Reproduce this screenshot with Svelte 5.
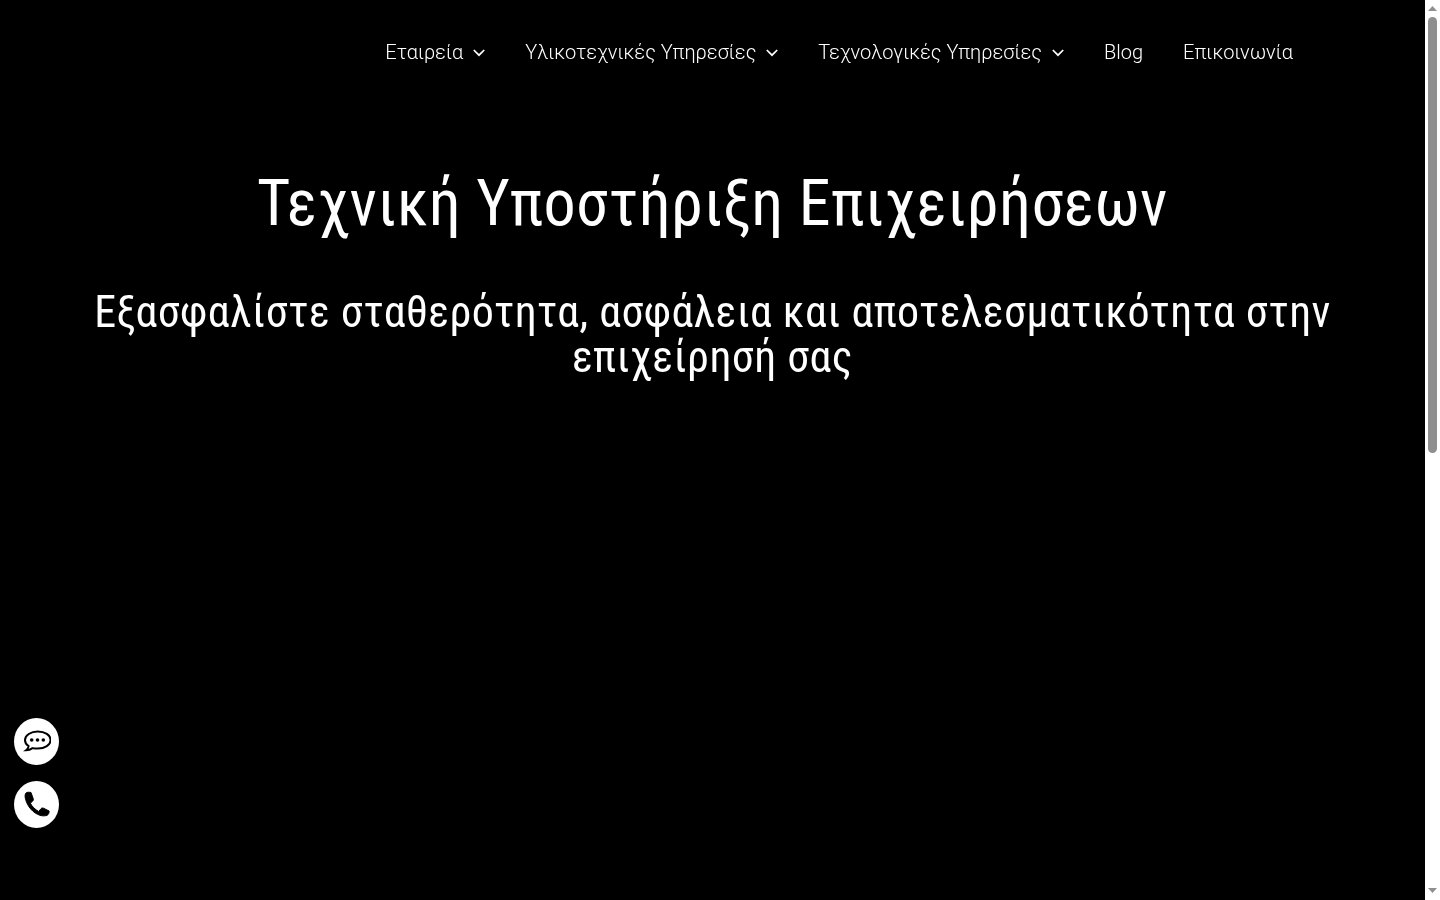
<script>
  const navItems = [
    { label: 'Εταιρεία', caret: true },
    { label: 'Υλικοτεχνικές Υπηρεσίες', caret: true },
    { label: 'Τεχνολογικές Υπηρεσίες', caret: true },
    { label: 'Blog', caret: false },
    { label: 'Επικοινωνία', caret: false }
  ];
</script>

<div class="window">
  <div class="page">
    <header class="top">
      <nav class="menu">
        {#each navItems as item}
          <a href="#top" class="menu_item">
            {item.label}
            {#if item.caret}
              <svg class="caret" viewBox="0 0 12 8" aria-hidden="true"><path d="M.8 1 6 6.200 11.200 1" /></svg>
            {/if}
          </a>
        {/each}
      </nav>
    </header>

    <section class="hero">
      <h1>Τεχνική Υποστήριξη Επιχειρήσεων</h1>
      <h2>Εξασφαλίστε σταθερότητα, ασφάλεια και αποτελεσματικότητα στην επιχείρησή σας</h2>
    </section>
  </div>

  <div class="scrollbar" aria-hidden="true">
    <svg class="arrow" viewBox="0 0 9 5"><path d="M4.500 0 9 5H0z" /></svg>
    <div class="track"><div class="thumb"></div></div>
    <svg class="arrow down" viewBox="0 0 9 5"><path d="M0 0h9L4.500 5z" /></svg>
  </div>
</div>

<div class="contact">
  <a href="#top" class="round" aria-label="Chat">
    <svg viewBox="0.500 0 28 28" width="28" height="28" aria-hidden="true">
      <path class="bubble" d="M15.300 3.500C8.200 3.500 2.500 7.300 2.500 12c0 2.500 1.400 4.700 3.600 6.200-.2 1.500-1 3-2.500 4.100 2.700 0 4.900-1 6.400-2.200 1.700.4 3.400.5 5.300.5 7.100 0 12.800-3.800 12.800-8.600s-5.700-8.500-12.800-8.500z" />
      <circle cx="9.200" cy="12" r="1.800" /><circle cx="15" cy="12" r="1.800" /><circle cx="20.800" cy="12" r="1.800" />
    </svg>
  </a>
  <a href="#top" class="round" aria-label="Phone">
    <svg class="phone" viewBox="-0.500 0.500 38 36" width="38" height="36" aria-hidden="true">
      <path d="M7.500 6.500C8.500 5.600 10.500 5.600 12.500 6L14.800 12.500C15 13.500 14.500 14.500 13.800 15L11.800 16.600C13.500 20 16.500 23 20.200 25L22.500 22.200C23.200 21.500 24 21.300 25 21.700L30.600 24.500C30.800 26 30 28.300 28.500 28.800C26.500 29.500 24 29.600 21.500 28.800C14.500 26.500 8.700 20 6.900 12C6.400 10 6.400 7.800 7.500 6.500Z" />
    </svg>
  </a>
</div>

<style>
  :global(html), :global(body) {
    overflow: hidden;
  }
  :global(body) {
    background: #000;
    color: #fff;
    font-family: Roboto, "Liberation Sans", sans-serif;
  }
  .window {
    display: flex;
    height: 900px;
  }
  .page {
    flex: 1;
    min-width: 0;
    will-change: transform;
  }
  .top {
    display: flex;
    justify-content: flex-end;
    padding: 40px 132px 0 0;
  }
  .menu {
    display: flex;
    gap: 40px;
  }
  .menu_item {
    display: flex;
    align-items: center;
    gap: 10px;
    color: #fff;
    font-size: 20px;
    font-weight: 300;
    line-height: 24px;
    text-decoration: none;
  }
  .caret {
    width: 12px;
    height: 8px;
    margin-top: 2px;
    fill: none;
    stroke: #fff;
    stroke-width: 1.700;
  }
  .hero {
    padding: 0 20px;
    margin-top: 104px;
    text-align: center;
  }
  h1 {
    margin: 0;
    font-size: 64px;
    font-weight: 400;
    font-stretch: 75%;
    line-height: 72px;
    letter-spacing: 0.470px;
  }
  h2 {
    margin: 50px 0 0;
    font-size: 44px;
    font-weight: 400;
    font-stretch: 75%;
    line-height: 45px;
    letter-spacing: 0.460px;
  }
  .scrollbar {
    display: flex;
    flex-direction: column;
    align-items: center;
    width: 15px;
    background: #fff;
  }
  .arrow {
    flex: none;
    width: 9px;
    height: 5px;
    margin: 6px 0 5px;
    fill: #8f8f8f;
  }
  .arrow.down {
    margin: 5px 0 7px;
  }
  .track {
    flex: 1;
    width: 100%;
    padding: 1px 3px 0;
    box-sizing: border-box;
  }
  .thumb {
    height: 436px;
    border-radius: 5px;
    background: #8f8f8f;
  }
  .contact {
    position: fixed;
    left: 14px;
    top: 718px;
    display: flex;
    flex-direction: column;
    gap: 16px;
  }
  .round {
    display: flex;
    align-items: center;
    justify-content: center;
    width: 45px;
    height: 47px;
    border-radius: 50%;
    background: #fff;
    color: #000;
  }
  .round svg {
    flex: none;
    fill: #000;
  }
  .round .phone {
    stroke: #000;
    stroke-width: 1;
    stroke-linejoin: round;
  }
  .round .bubble {
    fill: none;
    stroke: #000;
    stroke-width: 2;
  }
</style>
